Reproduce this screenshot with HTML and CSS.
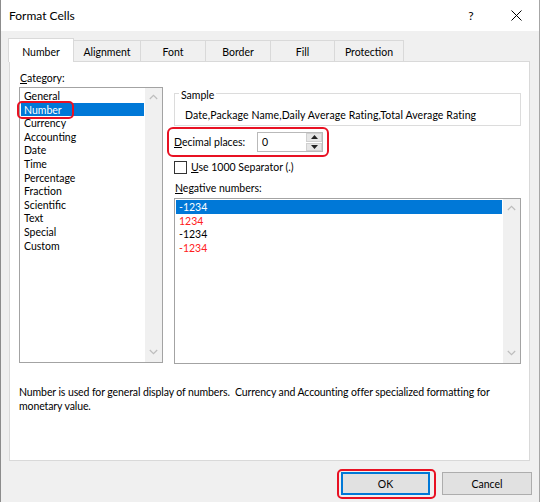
FILE: index.html
```html
<!DOCTYPE html>
<html>
<head>
<meta charset="utf-8">
<title>Format Cells</title>
<link rel="stylesheet" href="styles.css">
</head>
<body>
<div class="win">
  <div class="titlebar">
    <span class="title">Format Cells</span>
    <span class="help">?</span>
    <span class="close"><svg width="11" height="11" viewBox="0 0 11 11"><path d="M0.5 0.5 L10.5 10.5 M10.5 0.5 L0.5 10.5" stroke="#000" stroke-width="1" fill="none"/></svg></span>
  </div>
  <div class="tabs">
    <div class="tab active w-number">Number</div>
    <div class="tab w-align">Alignment</div>
    <div class="tab w-font">Font</div>
    <div class="tab w-border">Border</div>
    <div class="tab w-fill">Fill</div>
    <div class="tab w-prot">Protection</div>
  </div>
  <div class="panel">
    <div class="cols">
      <div class="cat">
        <div class="lbl"><u>C</u>ategory:</div>
        <div class="listbox cat-list">
          <div class="items">
            <div class="item">General</div>
            <div class="item sel">Number<span class="mark-number"></span></div>
            <div class="item">Currency</div>
            <div class="item">Accounting</div>
            <div class="item">Date</div>
            <div class="item">Time</div>
            <div class="item">Percentage</div>
            <div class="item">Fraction</div>
            <div class="item">Scientific</div>
            <div class="item">Text</div>
            <div class="item">Special</div>
            <div class="item">Custom</div>
          </div>
          <div class="vscroll">
            <svg width="9" height="6" viewBox="0 0 9 6"><path d="M0.8 5 L4.5 1.3 L8.2 5" stroke="#bdbdbd" stroke-width="1.2" fill="none"/></svg>
            <svg width="9" height="6" viewBox="0 0 9 6"><path d="M0.8 1 L4.5 4.7 L8.2 1" stroke="#bdbdbd" stroke-width="1.2" fill="none"/></svg>
          </div>
        </div>
      </div>
      <div class="right">
        <fieldset class="sample">
          <legend>Sample</legend>
          <div class="sample-text">Date,Package Name,Daily Average Rating,Total Average Rating</div>
        </fieldset>
        <div class="dec">
          <span class="dec-label"><u>D</u>ecimal places:</span>
          <div class="spin">
            <span class="spin-val">0</span>
            <span class="spin-btns">
              <span class="spin-up"><svg width="7" height="4" viewBox="0 0 7 4"><path d="M0 4 L3.5 0 L7 4 Z" fill="#222"/></svg></span>
              <span class="spin-down"><svg width="7" height="4" viewBox="0 0 7 4"><path d="M0 0 L3.5 4 L7 0 Z" fill="#222"/></svg></span>
            </span>
          </div>
        </div>
        <div class="chk-row">
          <span class="chk"></span>
          <span><u>U</u>se 1000 Separator (.)</span>
        </div>
        <div class="lbl neg-lbl"><u>N</u>egative numbers:</div>
        <div class="listbox neg-list">
          <div class="items">
            <div class="item sel">-1234</div>
            <div class="item red">1234</div>
            <div class="item">-1234</div>
            <div class="item red">-1234</div>
          </div>
          <div class="vscroll">
            <svg width="9" height="6" viewBox="0 0 9 6"><path d="M0.8 5 L4.5 1.3 L8.2 5" stroke="#bdbdbd" stroke-width="1.2" fill="none"/></svg>
            <svg width="9" height="6" viewBox="0 0 9 6"><path d="M0.8 1 L4.5 4.7 L8.2 1" stroke="#bdbdbd" stroke-width="1.2" fill="none"/></svg>
          </div>
        </div>
      </div>
    </div>
    <p class="desc">Number is used for general display of numbers.&nbsp; Currency and Accounting offer specialized formatting for<br>monetary value.</p>
  </div>
  <div class="footer">
    <div class="ok-mark"><button class="btn ok">OK</button></div>
    <button class="btn cancel">Cancel</button>
  </div>
</div>
</body>
</html>
```
FILE: styles.css
```css
* { box-sizing: border-box; }
html, body { margin: 0; padding: 0; }
body {
  width: 540px;
  height: 502px;
  font-family: Lato, "Noto Sans", sans-serif;
  font-size: 10.5px;
  color: #000;
  background: #f0f0f0;
  overflow: hidden;
}
u { text-decoration: underline; text-underline-offset: 1px; }

.win {
  width: 540px;
  height: 502px;
  background: #f0f0f0;
  border-left: 1px solid #8c8c8c;
  border-right: 1px solid #a6a6a6;
  display: flex;
  flex-direction: column;
}

.titlebar {
  height: 31px;
  flex: none;
  background: #fff;
  display: flex;
  align-items: center;
}
.title { flex: 1; padding-left: 8px; font-size: 12px; }
.help { width: 44px; text-align: center; font-size: 12px; }
.close { width: 46px; display: flex; justify-content: center; align-items: center; }

.tabs {
  height: 30px;
  flex: none;
  display: flex;
  align-items: flex-end;
  padding-left: 7px;
}
.tab {
  height: 21px;
  border: 1px solid #d9d9d9;
  border-bottom: none;
  margin-right: -1px;
  padding-top: 1px;
  display: flex;
  align-items: center;
  justify-content: center;
  background: #f0f0f0;
}
.tab.active {
  height: 24px;
  margin-bottom: -1px;
  padding-top: 2px;
  background: #fff;
  position: relative;
  z-index: 1;
}
.w-number { width: 66px; }
.w-align { width: 68px; }
.w-font { width: 66px; }
.w-border { width: 66px; }
.w-fill { width: 65px; }
.w-prot { width: 70px; }

.panel {
  flex: none;
  height: 400px;
  margin: 0 9px 0 8px;
  background: #fff;
  border: 1px solid #d9d9d9;
  padding: 9px 8px 0 9px;
}
.cols { display: flex; gap: 11px; }
.cat { width: 144px; flex: none; }
.right { width: 347px; flex: none; padding-top: 13px; }

.lbl { line-height: 14px; padding-left: 1px; white-space: nowrap; }
.cat .lbl { margin-bottom: 2px; }

.listbox {
  border: 1px solid #a3a3a3;
  background: #fff;
  display: flex;
}
.cat-list { height: 276px; }
.neg-list { height: 166px; margin-top: 3px; }
.items { flex: 1; padding: 1px; }
.item {
  height: 13.6px;
  line-height: 14.6px;
  padding-left: 3px;
  white-space: nowrap;
  position: relative;
}
.item.sel { background: #0078d7; color: #fff; }
.item.red { color: #ff2020; }
.mark-number {
  position: absolute;
  left: -4px;
  top: -2px;
  width: 57px;
  height: 18px;
  border: 2px solid #e81123;
  border-radius: 5px;
}
.vscroll {
  width: 17px;
  flex: none;
  background: #f0f0f0;
  display: flex;
  flex-direction: column;
  justify-content: space-between;
  align-items: center;
  padding: 6px 0 7px;
}

.sample {
  margin: 0;
  padding: 0 0 3px 10px;
  border: 1px solid #dcdcdc;
  min-width: 0;
}
.sample legend {
  padding: 4px 2px 0;
  margin-left: -6px;
  line-height: 14px;
}
.sample-text { margin-top: 6px; line-height: 14px; letter-spacing: 0.1px; white-space: nowrap; }

.dec {
  display: inline-flex;
  align-items: center;
  margin: 1px 0 0 -7px;
  border: 2px solid #e81123;
  border-radius: 6px;
  padding: 3px 4px 3px 5px;
}
.dec-label { width: 83px; white-space: nowrap; }
.spin {
  width: 66px;
  height: 20px;
  border: 1px solid #b9b9b9;
  background: #fff;
  display: flex;
}
.spin-val { flex: 1; padding-left: 4px; line-height: 18px; }
.spin-btns { width: 16px; display: flex; flex-direction: column; gap: 1px; background: #fff; }
.spin-btns > span {
  flex: 1;
  display: flex;
  align-items: center;
  justify-content: center;
  background: #e6e6e6;
  border: 1px solid #d0d0d0;
}

.chk-row {
  display: flex;
  align-items: center;
  height: 14px;
  margin-top: 3px;
}
.chk {
  width: 13px;
  height: 13px;
  border: 1px solid #333;
  background: #fff;
  margin-right: 4px;
}
.neg-lbl { margin-top: 7px; }

.desc {
  margin: 22px 0 0;
  line-height: 13.5px;
  letter-spacing: -0.1px;
  white-space: nowrap;
}

.footer {
  flex: 1;
  display: flex;
  justify-content: flex-end;
  align-items: flex-start;
  padding: 8px 7px 0 0;
  gap: 6px;
}
.ok-mark {
  border: 2px solid #e81123;
  border-radius: 5px;
  padding: 1px 4px 2px 2px;
}
.btn {
  height: 23px;
  font: inherit;
  color: #000;
  background: #e1e1e1;
  border: 1px solid #adadad;
  padding: 0;
  display: flex;
  align-items: center;
  justify-content: center;
}
.btn.ok {
  width: 89px;
  border-color: #0078d7;
  box-shadow: inset 0 0 0 1px #0078d7;
}
.btn.cancel { width: 90px; margin-top: 3px; }
```
